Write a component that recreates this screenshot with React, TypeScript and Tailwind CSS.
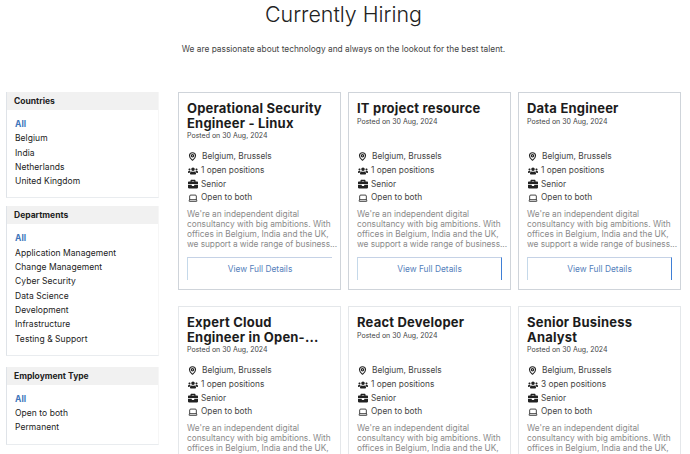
import { Laptop, MapPin } from 'lucide-react';
import { FaBriefcase, FaUsers } from 'react-icons/fa';

interface Job {
  title: string;
  positions: string;
}

const jobs: Job[] = [
  { title: 'Operational Security Engineer - Linux', positions: '1 open positions' },
  { title: 'IT project resource', positions: '1 open positions' },
  { title: 'Data Engineer', positions: '1 open positions' },
  { title: 'Expert Cloud Engineer in Open-...', positions: '1 open positions' },
  { title: 'React Developer', positions: '1 open positions' },
  { title: 'Senior Business Analyst', positions: '3 open positions' },
];

const filters = [
  { name: 'Countries', gap: 'mb-[8px]', items: ['All', 'Belgium', 'India', 'Netherlands', 'United Kingdom'] },
  {
    name: 'Departments',
    gap: 'mb-[11px]',
    items: [
      'All',
      'Application Management',
      'Change Management',
      'Cyber Security',
      'Data Science',
      'Development',
      'Infrastructure',
      'Testing & Support',
    ],
  },
  { name: 'Employment Type', gap: '', items: ['All', 'Open to both', 'Permanent'] },
];

function FilterBox({ name, items, gap }: { name: string; items: string[]; gap: string }) {
  return (
    <div className={`border-r border-b border-l border-r-[#f6f6f6] border-b-[#e9ecef] border-l-[#dfe3e8] pb-[9px] ${gap}`}>
      <div className="h-[18px] bg-[#f1f1f1] pl-[7px] text-[8.5px] leading-[18px] font-bold text-[#222]">{name}</div>
      <ul className="pt-[7px] pl-[8px] text-[8.5px] leading-[14.3px] tracking-[0.05px] text-[#222]">
        {items.map((item, i) => (
          <li key={item} className={i === 0 ? 'font-bold text-[#3d76bb]' : ''}>
            {item}
          </li>
        ))}
      </ul>
    </div>
  );
}

function JobCard({ job, index }: { job: Job; index: number }) {
  return (
    <div className={`h-[198px] border px-[8px] pt-[8px] ${index < 3 ? 'border-[#cfd4da]' : 'border-[#e4e7ea]'}`}>
      <div className="h-[49px]">
        <h3 className="pr-[6px] text-[13px] leading-[14.5px] font-bold tracking-[0.2px] text-[#1c1c1c]">{job.title}</h3>
        <p className="mt-[1px] text-[7px] leading-[10px] text-[#444]">Posted on 30 Aug, 2024</p>
      </div>
      <ul className="flex flex-col text-[8.3px] leading-[13.8px] text-[#444]">
        <li className="flex items-center gap-[5px]">
          <MapPin size={9} className="ml-[1px] text-[#222]" strokeWidth={3} />
          Belgium, Brussels
        </li>
        <li className="flex items-center gap-[3px]">
          <FaUsers size={10} className="ml-[1px] text-[#222]" />
          {job.positions}
        </li>
        <li className="flex items-center gap-[3px]">
          <FaBriefcase size={10} className="ml-[1px] text-[#222]" />
          Senior
        </li>
        <li className="flex items-center gap-[3px]">
          <Laptop size={10} className="ml-[1px] text-[#222]" />
          Open to both
        </li>
      </ul>
      <p className="mt-[5px] text-[8.3px] leading-[9.9px] text-[#8a8a8a]">
        We're an independent digital consultancy with big ambitions. With offices in Belgium, India and the UK,{' '}
        <span className="whitespace-nowrap tracking-[-0.05px]">we support a wide range of business...</span>
      </p>
      <button
        className={`mt-[7px] h-[23px] w-full border-t border-l border-t-[#c5d2e6] border-l-[#c5d9ea] text-[8.4px] text-[#5580bb] ${
          index === 0 ? '' : 'border-r border-r-[#3f7fd6]'
        }`}
      >
        View Full Details
      </button>
    </div>
  );
}

export default function App() {
  return (
    <div className="h-[454px] w-[690px] overflow-hidden bg-white font-['Inter',sans-serif]">
      <div className="pr-[3px] text-center">
        <h1 className="text-[21.4px] leading-[28px] font-light text-[#222]">Currently Hiring</h1>
        <p className="mt-[15px] text-[8.35px] leading-[12px] text-[#444]">
          We are passionate about technology and always on the lookout for the best talent.
        </p>
      </div>
      <div className="mt-[37px] flex gap-[19px] pl-[6px]">
        <aside className="w-[153px] shrink-0">
          {filters.map((f) => (
            <FilterBox key={f.name} name={f.name} items={f.items} gap={f.gap} />
          ))}
        </aside>
        <main className="grid w-[503px] grid-cols-3 gap-x-[7px] gap-y-[16px]">
          {jobs.map((job, i) => (
            <JobCard key={job.title} job={job} index={i} />
          ))}
        </main>
      </div>
    </div>
  );
}
